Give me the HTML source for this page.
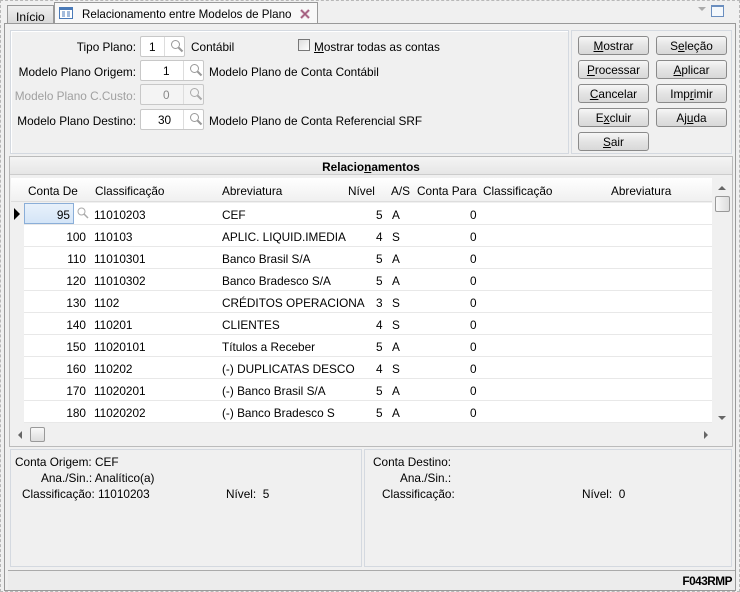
<!DOCTYPE html>
<html><head><meta charset="utf-8"><style>
*{box-sizing:border-box;margin:0;padding:0}
body{width:740px;height:592px;background:#f0f0f0;font-family:"Liberation Sans",sans-serif;font-size:11.8px;color:#000;position:relative;overflow:hidden}
.a{position:absolute;white-space:nowrap}
.lbl{text-align:right;width:130px;left:6px}
.inp{background:#fff;border:1px solid #c8c8c8;border-radius:2px;height:21px}
.inp span{position:absolute;top:3px}
.mg{position:absolute;right:0;top:0;width:20px;height:19px;border-left:1px solid #ddd}
.btn{position:absolute;width:71px;height:19px;border:1px solid #8a8a8a;border-radius:3px;background:linear-gradient(#f6f6f6,#e4e4e4 50%,#d8d8d8);text-align:center;line-height:18px}
.row{position:absolute;left:24px;width:688px;height:22px;background:#fff;border-bottom:1px solid #e8e8e8}
.row span{position:absolute;top:5px}
.hd span{position:absolute;top:6px}
u{text-decoration:underline}
</style></head><body>
<div class="a" style="left:0;top:0;width:740px;height:592px;border:1px dashed #b8b8b8"></div>
<!-- tabs -->
<div class="a" style="left:7px;top:5px;width:47px;height:19px;border:1px solid #999;background:linear-gradient(#f0f0f0,#d9d9d9);padding:4px 0 0 8px;font-size:12px">Início</div>
<div class="a" style="left:54px;top:2px;width:264px;height:23px;border:1px solid #999;border-bottom:none;background:#f8f8f8;font-size:11.6px;padding:5px 0 0 27px">Relacionamento entre Modelos de Plano</div>
<svg class="a" style="left:59px;top:7px" width="14" height="12"><rect x=".5" y=".5" width="13" height="11" fill="#fff" stroke="#4a7ab8"/><rect x="1" y="1" width="12" height="2" fill="#4a7ab8"/><path d="M3 5h3M3 7h3M3 9h3M8 5h3M8 7h3M8 9h3" stroke="#4a7ab8"/></svg>
<svg class="a" style="left:299px;top:8px" width="12" height="12"><path d="M2 2l8 8M10 2l-8 8" stroke="#c090a8" stroke-width="2.5"/><path d="M2 2l8 8M10 2l-8 8" stroke="#a05878" stroke-width="1"/></svg>
<div class="a" style="left:698px;top:7px;border-top:4px solid #aaa;border-left:4px solid transparent;border-right:4px solid transparent;width:0"></div>
<div class="a" style="left:711px;top:5px;width:13px;height:12px;border:1px solid #6a8ebf;border-top-width:2px;background:#f4f8fc"></div>
<div class="a" style="left:4px;top:23px;width:732px;height:568px;border:1px solid #999;background:#f0f0f0"></div>
<!-- top panels -->
<div class="a" style="left:10px;top:30px;width:559px;height:124px;border:1px solid #d4d9e0;box-shadow:inset 1px 1px 0 #fff"></div>
<div class="a" style="left:571px;top:30px;width:161px;height:124px;border:1px solid #d4d9e0"></div>
<div class="a lbl" style="top:40px">Tipo Plano:</div>
<div class="a inp" style="left:140px;top:36px;width:45px"><span style="left:8px">1</span><div class="mg"></div></div>
<div class="a" style="left:191px;top:40px">Contábil</div>
<div class="a" style="left:298px;top:39px;width:12px;height:12px;border:1px solid #777;background:linear-gradient(135deg,#ddd,#fff)"></div>
<div class="a" style="left:314px;top:40px"><u>M</u>ostrar todas as contas</div>
<div class="a lbl" style="top:65px">Modelo Plano Origem:</div>
<div class="a inp" style="left:140px;top:60px;width:64px"><span style="left:22px">1</span><div class="mg"></div></div>
<div class="a" style="left:209px;top:65px">Modelo Plano de Conta Contábil</div>
<div class="a lbl" style="top:89px;color:#a0a0a0">Modelo Plano C.Custo:</div>
<div class="a inp" style="left:140px;top:84px;width:64px;background:#f4f4f4"><span style="left:22px;color:#888">0</span><div class="mg"></div></div>
<div class="a lbl" style="top:114px">Modelo Plano Destino:</div>
<div class="a inp" style="left:140px;top:109px;width:64px"><span style="left:17px">30</span><div class="mg"></div></div>
<div class="a" style="left:209px;top:114px">Modelo Plano de Conta Referencial SRF</div>
<svg class="a" style="left:170px;top:39px" width="14" height="14"><circle cx="5.5" cy="5.5" r="4" fill="none" stroke="#999"/><path d="M8.5 8.5l4 4" stroke="#999" stroke-width="2"/></svg>
<svg class="a" style="left:189px;top:63px" width="14" height="14"><circle cx="5.5" cy="5.5" r="4" fill="none" stroke="#999"/><path d="M8.5 8.5l4 4" stroke="#999" stroke-width="2"/></svg>
<svg class="a" style="left:189px;top:87px" width="14" height="14"><circle cx="5.5" cy="5.5" r="4" fill="none" stroke="#aaa"/><path d="M8.5 8.5l4 4" stroke="#aaa" stroke-width="2"/></svg>
<svg class="a" style="left:189px;top:112px" width="14" height="14"><circle cx="5.5" cy="5.5" r="4" fill="none" stroke="#999"/><path d="M8.5 8.5l4 4" stroke="#999" stroke-width="2"/></svg>
<div class="btn" style="left:578px;top:36px"><u>M</u>ostrar</div>
<div class="btn" style="left:656px;top:36px">S<u>e</u>leção</div>
<div class="btn" style="left:578px;top:60px"><u>P</u>rocessar</div>
<div class="btn" style="left:656px;top:60px"><u>A</u>plicar</div>
<div class="btn" style="left:578px;top:84px"><u>C</u>ancelar</div>
<div class="btn" style="left:656px;top:84px">Imp<u>r</u>imir</div>
<div class="btn" style="left:578px;top:108px">E<u>x</u>cluir</div>
<div class="btn" style="left:656px;top:108px">Aj<u>u</u>da</div>
<div class="btn" style="left:578px;top:132px"><u>S</u>air</div>
<!-- grid -->
<div class="a" style="left:9px;top:156px;width:724px;height:291px;border:1px solid #bbb"></div>
<div class="a" style="left:10px;top:157px;width:722px;height:18px;background:linear-gradient(#f4f4f4,#e6e6e6);border-bottom:1px solid #ccc;text-align:center;font-weight:bold;padding-top:3px">Relacio<u>n</u>amentos</div>
<div class="a" style="left:11px;top:178px;width:701px;height:24px;background:linear-gradient(#fff,#f0f0f0);border-bottom:1px solid #ddd"></div>
<div class="a hd" style="left:11px;top:178px;width:701px;height:24px">
<span style="left:17px">Conta De</span><span style="left:84px">Classificação</span><span style="left:211px">Abreviatura</span><span style="left:337px">Nível</span><span style="left:380px">A/S</span><span style="left:406px">Conta Para</span><span style="left:472px">Classificação</span><span style="left:600px">Abreviatura</span>
</div>
<div class="a" style="left:11px;top:202px;width:13px;height:222px;background:#f0f0f0"></div>
<div class="a" style="left:14px;top:208px;width:0;height:0;border-left:6px solid #000;border-top:6px solid transparent;border-bottom:6px solid transparent"></div>
<div id="rows"></div>
<div class="a" style="left:24px;top:203px;width:50px;height:21px;border:1px solid #8aaed8;background:linear-gradient(#e8f1fb,#d4e5f7);text-align:right;padding:4px 3px 0 0">95</div>
<svg class="a" style="left:77px;top:207px" width="12" height="12"><circle cx="4.5" cy="4.5" r="3.5" fill="none" stroke="#aaa"/><path d="M7 7l4 4" stroke="#aaa" stroke-width="1.5"/></svg>
<div class="a" style="left:712px;top:178px;width:20px;height:246px;background:#f0f0f0"></div>
<div class="a" style="left:718px;top:186px;border-bottom:4px solid #666;border-left:4px solid transparent;border-right:4px solid transparent;width:0"></div>
<div class="a" style="left:715px;top:196px;width:15px;height:16px;border:1px solid #999;border-radius:2px;background:linear-gradient(90deg,#f8f8f8,#ddd)"></div>
<div class="a" style="left:718px;top:416px;border-top:4px solid #666;border-left:4px solid transparent;border-right:4px solid transparent;width:0"></div>
<div class="a" style="left:11px;top:424px;width:721px;height:20px;background:#f0f0f0"></div>
<div class="a" style="left:18px;top:431px;border-right:4px solid #666;border-top:4px solid transparent;border-bottom:4px solid transparent;width:0"></div>
<div class="a" style="left:30px;top:427px;width:15px;height:15px;border:1px solid #999;border-radius:2px;background:linear-gradient(#f8f8f8,#ddd)"></div>
<div class="a" style="left:704px;top:431px;border-left:4px solid #666;border-top:4px solid transparent;border-bottom:4px solid transparent;width:0"></div>
<!-- bottom -->
<div class="a" style="left:10px;top:449px;width:352px;height:118px;border:1px solid #d4d9e0"></div>
<div class="a" style="left:364px;top:449px;width:368px;height:118px;border:1px solid #d4d9e0"></div>
<div class="a" style="left:15px;top:455px">Conta Origem: CEF</div>
<div class="a" style="left:41px;top:471px">Ana./Sin.: Analítico(a)</div>
<div class="a" style="left:22px;top:487px">Classificação: 11010203</div>
<div class="a" style="left:226px;top:487px">Nível: &nbsp;5</div>
<div class="a" style="left:373px;top:455px">Conta Destino:</div>
<div class="a" style="left:400px;top:471px">Ana./Sin.:</div>
<div class="a" style="left:382px;top:487px">Classificação:</div>
<div class="a" style="left:582px;top:487px">Nível: &nbsp;0</div>
<div class="a" style="left:8px;top:570px;width:727px;height:20px;border-top:1px solid #aaa;background:#ececec"></div>
<div class="a" style="right:8px;top:574px;font-weight:bold;letter-spacing:-0.5px">F043RMP</div>
<script>
var d=[["95","11010203","CEF","5","A"],["100","110103","APLIC. LIQUID.IMEDIA","4","S"],["110","11010301","Banco Brasil S/A","5","A"],["120","11010302","Banco Bradesco S/A","5","A"],["130","1102","CRÉDITOS OPERACIONA","3","S"],["140","110201","CLIENTES","4","S"],["150","11020101","Títulos a Receber","5","A"],["160","110202","(-) DUPLICATAS DESCO","4","S"],["170","11020201","(-) Banco Brasil S/A","5","A"],["180","11020202","(-) Banco Bradesco S","5","A"]];
var h="";d.forEach(function(r,i){var t=203+i*22;h+='<div class="row" style="top:'+t+'px">'+(i?'<span style="right:626px">'+r[0]+'</span>':'')+'<span style="left:70px">'+r[1]+'</span><span style="left:198px">'+r[2]+'</span><span style="left:352px">'+r[3]+'</span><span style="left:368px">'+r[4]+'</span><span style="left:446px">0</span></div>';});
document.getElementById("rows").innerHTML=h;
</script>
</body></html>
